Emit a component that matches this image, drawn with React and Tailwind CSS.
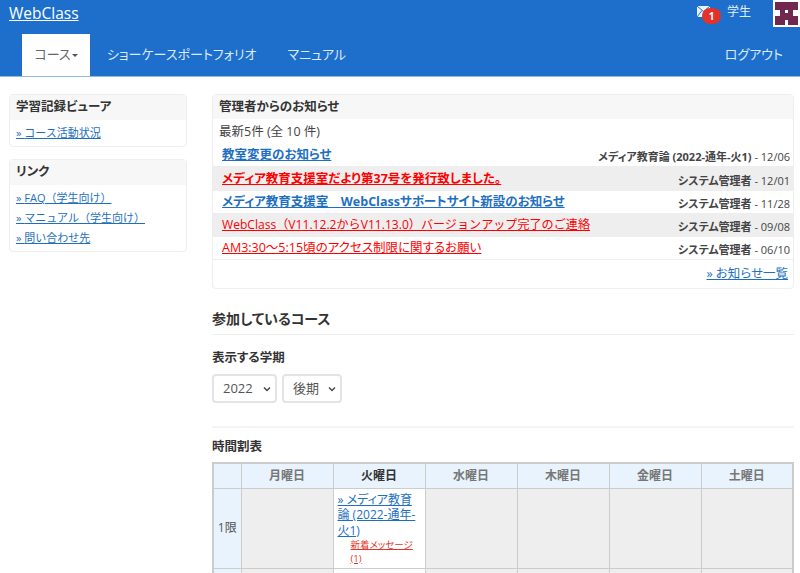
import React from 'react';

const notices = [
    { title: '教室変更のお知らせ', from: 'メディア教育論 (2022-通年-火1)', date: '12/06', cls: 'text-[12.5px] text-[#1e6fbf] font-bold', stripe: false, h: 'h-[21px]' },
    { title: 'メディア教育支援室だより第37号を発行致しました。', from: 'システム管理者', date: '12/01', cls: 'text-[12.5px] text-[#ff0000] font-bold', stripe: true, h: 'h-[24px]' },
    { title: 'メディア教育支援室　WebClassサポートサイト新設のお知らせ', from: 'システム管理者', date: '11/28', cls: 'text-[12.5px] text-[#1e6fbf] font-bold', stripe: false, h: 'h-[23px]' },
    { title: 'WebClass（V11.12.2からV11.13.0）バージョンアップ完了のご連絡', from: 'システム管理者', date: '09/08', cls: 'text-[12.1px] text-[#ff0000] [font-feature-settings:normal]', stripe: true, h: 'h-[23px]' },
    { title: 'AM3:30～5:15頃のアクセス制限に関するお願い', from: 'システム管理者', date: '06/10', cls: 'text-[12.5px] text-[#ff0000]', stripe: false, h: 'h-[23px]' },
];

const days = ['月曜日', '火曜日', '水曜日', '木曜日', '金曜日', '土曜日'];

function SidePanel({ title, links }) {
    return (
        <div className="mb-3 rounded border border-[#eeeeee] bg-white">
            <div className="flex h-[25px] items-center bg-[#f7f7f7] px-[6px] text-[12.5px] font-bold text-[#333333]">{title}</div>
            <div className="flex flex-col gap-[4px] px-[6px] pt-[5px] pb-[5px]">
                {links.map((l) => (
                    <a key={l} href="#" className="h-[16px] text-[11px] leading-[16px] text-[#1e6fbf] underline [font-feature-settings:normal]">» {l}</a>
                ))}
            </div>
        </div>
    );
}

function Select({ value, w }) {
    return (
        <div className={`flex h-[29px] items-center justify-between rounded border-2 border-[#e4e4e4] bg-white pr-[3px] pl-[9px] text-[13px] text-[#555555] ${w}`}>
            <span>{value}</span>
            <svg width="10" height="10" viewBox="0 0 10 10" fill="none" stroke="#444444" strokeWidth="1.4"><path d="M2 3.5 L5 6.5 L8 3.5" /></svg>
        </div>
    );
}

export default function App() {
    return (
        <div className="h-[573px] overflow-hidden bg-white text-[#333333] font-['Open_Sans','Noto_Sans_CJK_JP',sans-serif] [font-feature-settings:'palt']">
            {/* Header */}
            <div className="h-[77px] border-b border-[#8fbbe8] bg-[#1e6fcc]">
                <div className="flex h-[34px] items-start justify-between">
                    <a href="#" className="mt-[2px] ml-[9px] text-[15.5px] leading-[22px] text-white underline">WebClass</a>
                    <div className="flex items-start">
                        <div className="relative mt-[6px] mr-[6px] h-[18px] w-[24px]">
                            <svg width="13" height="11" viewBox="0 0 13 11" className="absolute top-0 left-0">
                                <rect width="13" height="11" fill="#eaf2fb" />
                                <path d="M0 0 L6.5 5.5 L13 0 M0 11 L5 4.5 M13 11 L8 4.5" fill="none" stroke="#1e6fcc" strokeWidth="1" />
                            </svg>
                            <span className="absolute top-[2px] left-[5px] flex h-[16px] w-[19px] items-center justify-center rounded-full bg-[#e2332a] text-[10px] font-bold text-white">1</span>
                        </div>
                        <span className="mt-[3px] mr-[22px] text-[12px] leading-[18px] text-[#e4eefa]">学生</span>
                        <div className="flex h-[27px] w-[27px] items-center justify-center bg-white">
                            <svg width="23" height="23" viewBox="0 0 23 23">
                                <rect width="23" height="23" fill="#70284f" />
                                <rect x="0" y="8" width="5" height="6" fill="#ffffff" />
                                <rect x="18" y="8" width="5" height="6" fill="#ffffff" />
                                <rect x="10" y="8" width="3" height="3" fill="#ffffff" />
                                <rect x="10" y="18" width="3" height="5" fill="#ffffff" />
                            </svg>
                        </div>
                    </div>
                </div>
                <div className="flex h-[42px] items-stretch text-[13px]">
                    <div className="ml-[22px] flex w-[68px] items-center justify-center bg-white text-[#666666]">
                        コース
                        <span className="ml-[1px] h-0 w-0 border-x-[3px] border-t-[3px] border-x-transparent border-t-[#555555]"></span>
                    </div>
                    <div className="ml-[17px] flex items-center text-[#dce9f8]">ショーケースポートフォリオ</div>
                    <div className="ml-[31px] flex items-center text-[#dce9f8]">マニュアル</div>
                    <div className="mr-[17px] ml-auto flex items-center text-[#dce9f8]">ログアウト</div>
                </div>
            </div>

            {/* Body */}
            <div className="flex items-start pt-[17px] pr-[6px] pl-[9px]">
                <div className="w-[178px] shrink-0">
                    <SidePanel title="学習記録ビューア" links={['コース活動状況']} />
                    <SidePanel title="リンク" links={['FAQ（学生向け）', 'マニュアル（学生向け）', '問い合わせ先']} />
                </div>

                <div className="ml-[25px] min-w-0 flex-1">
                    {/* Notices */}
                    <div className="rounded border border-[#eeeeee] bg-white">
                        <div className="flex h-[24px] items-center bg-[#f7f7f7] px-[6px] text-[12.5px] font-bold text-[#333333]">管理者からのお知らせ</div>
                        <div className="flex h-[27px] items-center px-[6px] text-[12.5px] text-[#444444]">最新5件 (全 10 件)</div>
                        {notices.map((n) => (
                            <div key={n.date} className={`flex items-end justify-between border-b border-[#eeeeee] pr-[3px] pl-[9px] ${n.h} ${n.stripe ? 'bg-[#eeeeee]' : ''}`}>
                                <a href="#" className={`mb-[2px] leading-[18px] whitespace-nowrap underline ${n.cls}`}>{n.title}</a>
                                <span className="text-[11px] leading-[18px] whitespace-nowrap text-[#444444]"><b>{n.from}</b> - {n.date}</span>
                            </div>
                        ))}
                        <div className="flex h-[28px] items-center justify-end pr-[5px] text-[12.5px]">
                            <a href="#" className="text-[#1e6fbf] underline">» お知らせ一覧</a>
                        </div>
                    </div>

                    {/* Courses */}
                    <h2 className="mt-[20px] border-b border-[#eeeeee] pb-[5px] text-[14px] leading-[20px] font-bold text-[#333333]">参加しているコース</h2>
                    <h3 className="mt-[14px] text-[12.5px] leading-[18px] font-bold text-[#333333]">表示する学期</h3>
                    <div className="mt-[7px] flex gap-[5px]">
                        <Select value="2022" w="w-[65px]" />
                        <Select value="後期" w="w-[60px]" />
                    </div>
                    <div className="mt-[23px] border-t-2 border-[#f4f4f4]"></div>
                    <h3 className="mt-[10px] text-[12.5px] leading-[18px] font-bold text-[#333333]">時間割表</h3>

                    {/* Timetable */}
                    <table className="mt-[6px] w-[582px] table-fixed border-collapse border-2 border-[#cccccc] text-[12px]">
                        <thead>
                            <tr className="h-[25px] bg-[#e8f3fd]">
                                <th className="w-[28px] border border-[#cccccc]"></th>
                                {days.map((d) => (
                                    <th key={d} className={`border border-[#cccccc] font-bold ${d === '火曜日' ? 'text-[#333333]' : 'text-[#777777]'}`}>{d}</th>
                                ))}
                            </tr>
                        </thead>
                        <tbody>
                            <tr className="h-[80px]">
                                <td className="border border-[#cccccc] bg-[#e8f3fd] text-center text-[#555555]">1限</td>
                                <td className="border border-[#cccccc] bg-[#eeeeee]"></td>
                                <td className="border border-[#cccccc] bg-white px-[4px] pt-[3px] align-top leading-[15.5px]">
                                    <a href="#" className="text-[#1e6fbf] underline">» メディア教育論 (2022-通年-火1)</a>
                                    <div className="pl-[13px] text-[9.5px] leading-[14px]">
                                        <a href="#" className="text-[#e2332a] underline">新着メッセージ (1)</a>
                                    </div>
                                </td>
                                <td className="border border-[#cccccc] bg-[#eeeeee]"></td>
                                <td className="border border-[#cccccc] bg-[#eeeeee]"></td>
                                <td className="border border-[#cccccc] bg-[#eeeeee]"></td>
                                <td className="border border-[#cccccc] bg-[#eeeeee]"></td>
                            </tr>
                            <tr className="h-[40px]">
                                <td className="border border-[#cccccc] bg-[#e8f3fd]"></td>
                                <td className="border border-[#cccccc] bg-[#eeeeee]"></td>
                                <td className="border border-[#cccccc] bg-white"></td>
                                <td className="border border-[#cccccc] bg-[#eeeeee]"></td>
                                <td className="border border-[#cccccc] bg-[#eeeeee]"></td>
                                <td className="border border-[#cccccc] bg-[#eeeeee]"></td>
                                <td className="border border-[#cccccc] bg-[#eeeeee]"></td>
                            </tr>
                        </tbody>
                    </table>
                </div>
            </div>
        </div>
    );
}
